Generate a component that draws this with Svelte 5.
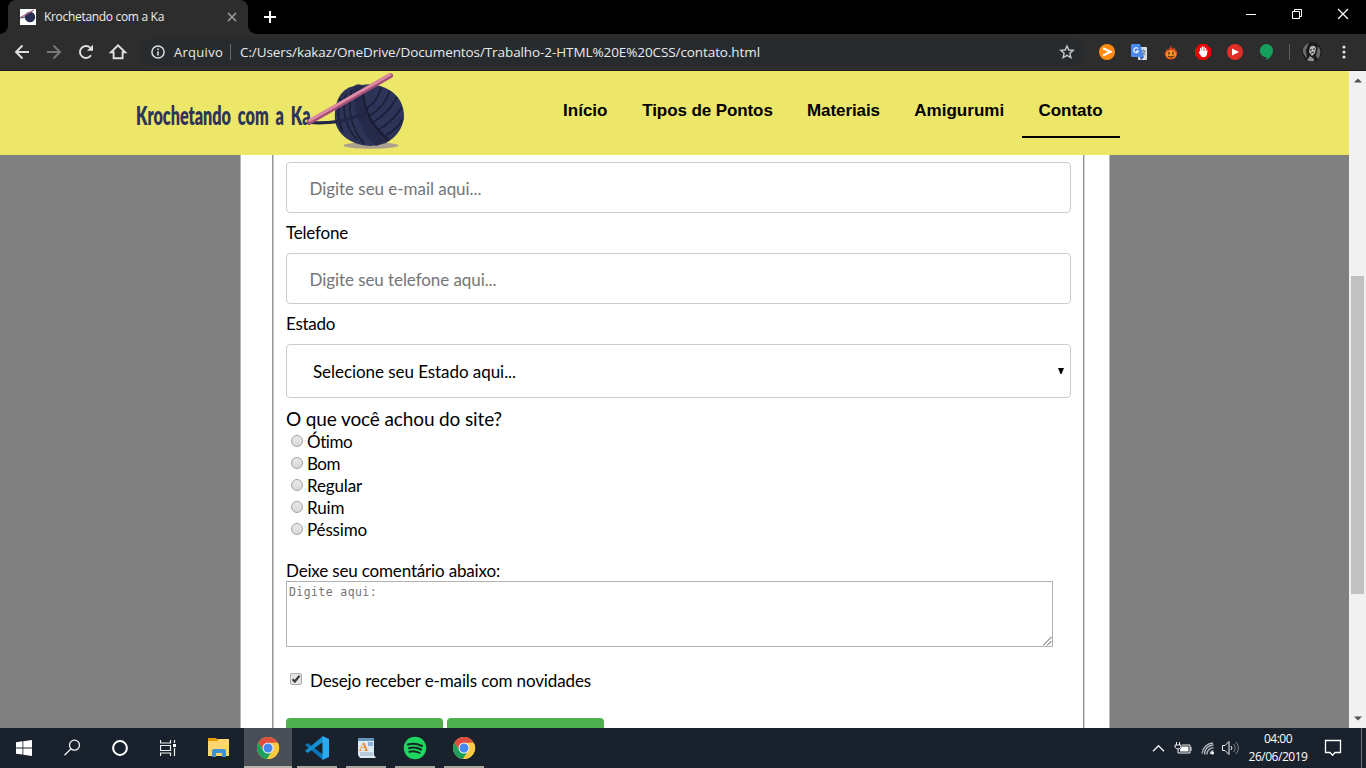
<script>
  const nav = [
    { text: 'Início', w: 44.5 },
    { text: 'Tipos de Pontos', w: 130.5 },
    { text: 'Materiais', w: 73 },
    { text: 'Amigurumi', w: 90 },
    { text: 'Contato', w: 64, active: true }
  ];
  const ratings = [
    { text: 'Ótimo', w: 45.5 },
    { text: 'Bom', w: 33 },
    { text: 'Regular', w: 55 },
    { text: 'Ruim', w: 37.5 },
    { text: 'Péssimo', w: 60 }
  ];

  // Spreads a label's letters so that it takes the given width.
  function fit(node, width) {
    const apply = () => {
      node.style.letterSpacing = '0px';
      const natural = node.getBoundingClientRect().width;
      node.style.letterSpacing = (width - natural) / node.textContent.length + 'px';
    };
    apply();
    document.fonts?.ready.then(apply);
  }
</script>

{#snippet chrome()}
  <svg width="24" height="24" viewBox="0 0 24 24">
    <circle cx="12" cy="12" r="11" fill="#fbc93d" />
    <path d="M2.5 6.5A11 11 0 0 1 21.5 6.5L12 7 7.5 14.5z" fill="#df4d41" />
    <path d="M2.5 6.5A11 11 0 0 0 11 23L16.5 14.5 7.5 14.5z" fill="#1ca15d" />
    <path d="M22 7.200A11 11 0 0 1 11 23L16.7 14.5 16 7.200z" fill="#fdcb42" />
    <circle cx="12" cy="12" r="5.5" fill="#f4f4f4" />
    <circle cx="12" cy="12" r="4.5" fill="#4688ef" />
  </svg>
{/snippet}

{#snippet yarn()}
  <ellipse cx="371" cy="145.500" rx="27.500" ry="3.300" fill="#aaa08f" />
  <path d="M338 99Q343 88 354 86Q357 83 362 85Q377 82 391 91Q404 100 404 117Q402 134 386 143Q370 149 355 143Q338 136 335 121Q334 108 338 99z" fill="#2e3458" />
  <g fill="none" stroke="#1b2038" stroke-width="1.800">
    <path d="M346 94Q339 119 357 140M341 98Q335 117 343 132M352 90Q344 119 364 144" />
    <path d="M366 109Q378 101 381 88M369 116Q384 108 390 91M372 123Q389 113 397 97M376 131Q393 122 402 107M381 138Q397 130 403 119" />
  </g>
  <path d="M354 86Q351 122 376 146L391 139Q364 121 363 86z" fill="#25294a" />
  <path d="M363 88Q363 119 388 140" fill="none" stroke="#171c33" stroke-width="1.800" />
  <path d="M309 122.500Q335 124 352 118L365 114" fill="none" stroke="#202643" stroke-width="3.200" />
  <path d="M309.500 122L390.500 75.500" stroke="#a34f77" stroke-width="5" stroke-linecap="round" />
  <path d="M309.500 120.500L390 74.500" stroke="#df8ba4" stroke-width="2.800" stroke-linecap="round" />
{/snippet}

<div class="screen">
  <div class="tabs">
    <div class="tab">
      <svg class="fav" width="16" height="16" viewBox="0 0 16 16">
        <rect width="16" height="16" fill="#fff" />
        <circle cx="10" cy="8" r="5.2" fill="#292e50" />
        <path d="M0 9L5 8" stroke="#292e50" />
        <path d="M0 8.8L14 1" stroke="#bd6f8e" stroke-width="1.2" />
      </svg>
      <span class="title"><span use:fit={120}>Krochetando com a Ka</span></span>
      <svg class="close" width="10" height="10" viewBox="0 0 10 10"><path d="M1 1l8 8M9 1L1 9" stroke="#a0a1a3" stroke-width="1.5" /></svg>
    </div>
    <svg class="plus" width="12" height="12" viewBox="0 0 12 12"><path d="M6 0v12M0 6h12" stroke="#fff" stroke-width="2" /></svg>
    <svg class="win" width="104" height="12" viewBox="0 0 104 12" fill="none" stroke="#fff">
      <path d="M0 6.5h10" />
      <path d="M46.5 3.5h7v7h-7zM48.500 3.500v-2h7v7h-2" />
      <path d="M92 1l10 10M102 1L92 11" stroke-width="1.2" />
    </svg>
  </div>

  <div class="toolbar">
    <svg class="navicons" width="130" height="34" viewBox="0 0 130 34" fill="none" stroke="#e0e0e1" stroke-width="1.9">
      <path d="M29 17H16M22.500 10.500L16 17l6.500 6.500" />
      <path d="M47 17h13M53.500 10.500L60 17l-6.500 6.500" stroke="#77787a" />
      <path d="M91 20.200a6 6 0 1 1-.8-7.500" />
      <path d="M93 9.700v6h-6z" fill="#e0e0e1" stroke="none" />
      <path d="M111 17.200h2.600v6h9v-6h2.600L118 10.300z" />
    </svg>
    <div class="omni">
      <svg width="14" height="14" viewBox="0 0 14 14"><circle cx="7" cy="7" r="6.100" fill="none" stroke="#dcdddf" stroke-width="1.500" /><path d="M7 6.200V10.500M7 3.500V5" stroke="#dcdddf" stroke-width="1.600" /></svg>
      <span class="arq"><span use:fit={49}>Arquivo</span></span>
      <i></i>
      <span class="url"><span use:fit={520}>C:/Users/kakaz/OneDrive/Documentos/Trabalho-2-HTML%20E%20CSS/contato.html</span></span>
      <svg class="star" width="16" height="16" viewBox="0 0 16 16"><path d="M8 2l1.800 4 4.400.4-3.300 2.900 1 4.300L8 11.300l-3.900 2.300 1-4.300-3.300-2.900L6.200 6z" fill="none" stroke="#c8cacc" stroke-width="1.400" /></svg>
    </div>
    <div class="ext">
      <svg width="16" height="16" viewBox="0 0 16 16"><circle cx="8" cy="8" r="8" fill="#ff8a0c" /><path d="M4 4.300l7.500 3.500L4 11.500" fill="none" stroke="#fff" stroke-width="2.200" /></svg>
      <svg width="16" height="16" viewBox="0 0 16 16"><rect x="7" y="3" width="9" height="13" rx="1" fill="#d9dce0" /><path d="M1 0h8l4 13H1a1 1 0 0 1-1-1V1a1 1 0 0 1 1-1z" fill="#4a8af0" /><path d="M9 13h4l-3 3z" fill="#2757b5" /><path d="M7 4.700A2.400 2.400 0 1 0 7.400 7H5" fill="none" stroke="#fff" stroke-width="1.100" /><path d="M10.500 7h4M12.500 5.500V7M14 7q-.5 3-3 4M11.500 8q1 2.500 3 3" fill="none" stroke="#697d8b" /></svg>
      <svg width="16" height="16" viewBox="0 0 16 16"><path d="M8 1q0 3 2 4l1-2q.5 2 3 4.500c1 5-2 8-6 8S1 12 2 8.500L4 5l1 1q2-1 3-5z" fill="#df471c" /><ellipse cx="8" cy="10.300" rx="5" ry="4" fill="#f69b24" /><path d="M6 8v2.500M10 8v2.500M5 12q3 2 6 0" stroke="#58220f" fill="none" stroke-width="1.300" /></svg>
      <svg width="16" height="16" viewBox="0 0 16 16"><path d="M4.700 0h6.600L16 4.700v6.600L11.300 16H4.700L0 11.300V4.700z" fill="#e10808" /><path d="M5.600 8V4.300M7.300 7V3M9 7V3.200M10.700 8V4.500" stroke="#fff" stroke-width="1.300" stroke-linecap="round" /><path d="M5 7h6.300l1.400-1-.7 4q-.8 3.200-3.600 3.200-2 0-3-2.200L3.700 8.500z" fill="#fff" /></svg>
      <svg width="16" height="16" viewBox="0 0 16 16"><circle cx="8" cy="8" r="8" fill="#e52d27" /><path d="M5 4.500l7 3.500-7 3.500z" fill="#fff" /></svg>
      <svg width="16" height="16" viewBox="0 0 16 16"><path d="M7.500 0a6.600 6.600 0 0 1 6.600 6.600q0 6-6.600 9.400v-2.700A6.600 6.600 0 1 1 7.500 0z" fill="#13a05b" /></svg>
    </div>
    <i class="sep"></i>
    <svg class="avatar" width="20" height="20" viewBox="0 0 20 20">
      <circle cx="10" cy="10" r="10" fill="#1b1b1b" /><path d="M1 7Q3 2 7 1L4 8l1 8Q0 12 1 7M16 4q5 6 0 13l-2-3z" fill="#68696a" />
      <path d="M8 5q4-3 6 1l-1 5-3 3-3-4z" fill="#b5b5b5" /><path d="M8 8h2M11 7h2M9 11l3-1" stroke="#202020" /><path d="M5 18l3-4 4 3v2q-4 1-7-1z" fill="#929292" />
    </svg>
    <svg class="dots" width="4" height="14" viewBox="0 0 4 14" fill="#dfe0e1"><circle cx="2" cy="2" r="1.600" /><circle cx="2" cy="7" r="1.600" /><circle cx="2" cy="12" r="1.600" /></svg>
  </div>

  <div class="view">
    <div class="page">
      <header>
        <svg class="logo" width="280" height="84" viewBox="130 71 280 84">
          <text x="136" y="124.500" textLength="174.500" lengthAdjust="spacingAndGlyphs">Krochetando com a Ka</text>
          {@render yarn()}
        </svg>
        <nav>
          {#each nav as n}<a class:active={n.active}><span use:fit={n.w}>{n.text}</span></a>{/each}
        </nav>
      </header>
      <main>
        <div class="sheet">
          <form>
            <div class="field"><span use:fit={172}>Digite seu e-mail aqui...</span></div>
            <div class="label"><span use:fit={62}>Telefone</span></div>
            <div class="field"><span use:fit={187}>Digite seu telefone aqui...</span></div>
            <div class="label"><span use:fit={49}>Estado</span></div>
            <div class="field select"><span use:fit={203}>Selecione seu Estado aqui...</span><svg width="6" height="6" viewBox="0 0 6 6"><path d="M0 0h6L3.500 6h-1z" /></svg></div>
            <div class="question"><span use:fit={216}>O que você achou do site?</span></div>
            {#each ratings as r}
              <div class="radio"><b></b><span use:fit={r.w}>{r.text}</span></div>
            {/each}
            <div class="comment"><span use:fit={214}>Deixe seu comentário abaixo:</span></div>
            <div class="area"><span use:fit={88}>Digite aqui:</span>
              <svg width="9" height="9" viewBox="0 0 9 9"><path d="M0 8.500L8.500 0M4 8.500L8.500 4" stroke="#555" /></svg>
            </div>
            <div class="check">
              <svg width="12" height="12" viewBox="0 0 12 12"><rect x=".5" y=".5" width="11" height="11" rx="1.500" fill="#e6e6e6" stroke="#adadad" /><path d="M2.600 6.200l2.200 2.300L9.500 2.700" fill="none" stroke="#3b3b3b" stroke-width="2.200" /></svg>
              <span use:fit={281}>Desejo receber e-mails com novidades</span>
            </div>
            <div class="buttons"><i></i><i></i></div>
          </form>
        </div>
      </main>
    </div>
    <div class="scroll">
      <svg width="8" height="5" viewBox="0 0 8 5"><path d="M0 4.500L4 .5l4 4z" fill="#505050" /></svg>
      <i></i>
      <svg width="8" height="5" viewBox="0 0 8 5"><path d="M0 .5l4 4 4-4z" fill="#505050" /></svg>
    </div>
  </div>

  <footer>
    <div class="app"><svg width="16" height="16" viewBox="0 0 16 16" fill="#fff"><path d="M0 2.200l6.500-.9v6.200H0zM7.300 1.200L16 0v7.500H7.300zM0 8.400h6.500v6.200L0 13.700zM7.300 8.400H16V16l-8.700-1.200z" /></svg></div>
    <div class="app"><svg width="18" height="18" viewBox="0 0 18 18" fill="none" stroke="#f1f2f3" stroke-width="1.300"><circle cx="11.500" cy="6.200" r="5" /><path d="M8 9.800L1.500 16.300" /></svg></div>
    <div class="app"><svg width="16" height="16" viewBox="0 0 16 16"><circle cx="8" cy="8" r="6.900" fill="none" stroke="#fff" stroke-width="2" /></svg></div>
    <div class="app"><svg width="16" height="16" viewBox="0 0 16 16" fill="none" stroke="#eff0f1" stroke-width="1.200"><path d="M.5 0v3h10V0M.5 16v-3h10v3M.5 5.500h10v5H.5zM14.500 0v3M14.500 8v8" /><path d="M13 4h3v3h-3z" fill="#fff" stroke="none" /></svg></div>
    <div class="app gap"><svg width="22" height="20" viewBox="0 0 22 20"><path d="M0 2h9l1-1h11v17H0z" fill="#ffd66e" /><path d="M0 0h8l2 2-1 1H0z" fill="#e5a000" /><path d="M4 19v-6q0-2 2-2h10q2 0 2 2v6h-4v-4H8v4z" fill="#3d91d5" /></svg></div>
    <div class="app gap on">{@render chrome()}</div>
    <div class="app gap open"><svg width="24" height="24" viewBox="0 0 24 24"><path d="M0 9l2.500-2L18 18.500v5.500L0 9z" fill="#0875b8" /><path d="M0 15l2.500 2L18 6V0L0 15z" fill="#1590d3" /><path d="M17.500 0L24 3v18l-6.500 3z" fill="#2aabf0" /></svg></div>
    <div class="app gap open"><svg width="19" height="22" viewBox="0 0 19 22"><path d="M1 1h16v17l2 3H3l-2-3z" fill="#dceaf3" /><path d="M1 1h16v3H1z" fill="#6495bd" /><text x="2" y="14" class="wp">A</text><path d="M11 6h5M11 8h5" stroke="#3f79c9" /><path d="M3 16h13M3 18h13" stroke="#91abc2" /></svg></div>
    <div class="app gap open"><svg width="24" height="24" viewBox="0 0 24 24"><circle cx="12" cy="12" r="11.200" fill="#1ed760" /><path d="M5 8.500q7-2 14 1.500M6 12.200q6-1.800 12 1.300M6.500 15.700q5-1.300 10 1.200" fill="none" stroke="#172824" stroke-width="2.100" stroke-linecap="round" /></svg></div>
    <div class="app gap open">{@render chrome()}</div>
    <svg class="tray" width="90" height="20" viewBox="0 0 90 20" fill="none" stroke="#f0f1f2">
      <path d="M1 13.200l5.500-5.500 5.500 5.500" stroke-width="1.400" />
      <path d="M24.500 4v3M27.500 4v3M23 7h6v2q-1 2-3 2t-3-2zM26 11v4h12V7h-8" /><path d="M39 9v4" /><path d="M30 8.500h6.500v5H28v-2z" fill="#fff" stroke="none" />
      <path d="M58.500 16a2.500 2.500 0 0 1 3-3M55 16.500a6 6 0 0 1 6.500-6.500M52.500 16.500a9 9 0 0 1 9-9.500M50 15.500A11.500 11.500 0 0 1 61 5" stroke="#b8bcc1" stroke-width="1.300" /><circle cx="60.500" cy="15" r="1.500" fill="#fff" stroke="none" />
      <path d="M70.500 7.500h2.500l4-4v13l-4-4h-2.500z" /><path d="M79 8q2 2 0 4" /><path d="M81.500 6q3.500 4 0 8M84 4q5 6 0 12" stroke="#77808a" />
    </svg>
    <div class="clock"><div><span use:fit={28}>04:00</span></div><div><span use:fit={59}>26/06/2019</span></div></div>
    <svg class="note" width="18" height="18" viewBox="0 0 18 18" fill="none" stroke="#fff" stroke-width="1.300"><path d="M1.500 1.500h15v12H11l-2.500 2.700L6 13.500H1.500z" /></svg>
    <i class="desk"></i>
  </footer>
</div>

<style>
  :global(body) { margin: 0; overflow: hidden; }
  .screen { width: 1366px; height: 768px; display: flex; flex-direction: column; overflow: hidden; font-family: "Open Sans", sans-serif; }
  .screen :global(*) { box-sizing: border-box; }
  svg { display: block; flex: none; }
  span { white-space: nowrap; display: inline-block; }
  .tabs { height: 34px; background: #000; display: flex; align-items: flex-start; flex: none; }
  .tab { width: 240px; height: 34px; margin-left: 8px; background: #2d2d2d; border-radius: 8px 8px 0 0; display: flex; align-items: center; padding-left: 12px; color: #eee; font-size: 12px; position: relative; }
  .tab::before, .tab::after { content: ""; position: absolute; bottom: 0; width: 8px; height: 8px; background: radial-gradient(circle at 0 0, transparent 7.500px, #2d2d2d 8px); }
  .tab::before { left: -8px; }
  .tab::after { right: -8px; background: radial-gradient(circle at 100% 0, transparent 7.500px, #2d2d2d 8px); }
  .title { margin: -1px 0 0 8px; width: 183px; }
  .plus { margin: 11px 0 0 16px; }
  .win { margin: 8px 16px 0 auto; }
  .toolbar { height: 37px; flex: none; background: #2d2d2d; border-bottom: 1px solid #1c1c1c; display: flex; align-items: center; }
  .navicons { margin-right: 10px; }
  .omni { width: 945px; height: 28px; border-radius: 14px; background: #282b2d; display: flex; align-items: center; padding-left: 11px; font-size: 13.500px; color: #e8eaed; }
  .arq, .url { margin-top: -1px; }
  .arq { width: 49px; margin-left: 9px; font-size: 13px; }
  .omni i { width: 1px; height: 16px; background: #68696b; margin: 0 9px 0 7px; }
  .star { margin: 0 10px 0 auto; }
  .ext { display: flex; gap: 16px; margin-left: 14px; }
  .sep { width: 1px; height: 16px; background: #5c5c5c; margin: 0 12px 0 14px; }
  .dots { margin-left: 20px; }
  .view { display: flex; height: 657px; flex: none; }
  .page { width: 1349px; display: flex; flex-direction: column; overflow: hidden; }
  header { height: 84px; flex: none; background: #ede769; display: flex; padding-left: 130px; }
  .logo text { font: 800 26px Lato, sans-serif; word-spacing: 5px; fill: #2e3458; }
  nav { display: flex; margin-left: 136px; font: bold 17px "Liberation Sans", Arial, sans-serif; color: #000; }
  nav a { height: 67px; padding: 30px 17px 0; border-bottom: 2px solid transparent; line-height: 20px; margin-right: .250px; }
  nav a:first-child { margin-right: .750px; }
  nav a.active { border-color: #000; margin-right: 0; }
  nav a { line-height: 19px; }
  main { flex: 1; min-height: 0; background: #808080; padding-left: 240px; }
  .sheet { width: 870px; height: 573px; background: #fff; border: 1px solid #b5b5b5; border-width: 0 1px; padding-left: 31px; overflow: hidden; }
  form { position: relative; width: 813px; height: 573px; border-left: 1px solid #949494; padding: 7px 12px 0 13px; font: 17px/20px Lato, sans-serif; color: #000; box-shadow: inset 1px 0 #c8c8c8, inset -1px 0 #d2d2d2, inset -2px 0 #949494; }
  .field { width: 785px; height: 51px; border: 1px solid #ccc; border-radius: 4px; padding-left: 22.500px; display: flex; align-items: center; color: #757575; padding-top: 2px; }
  .label { height: 40px; padding-top: 10.400px; }
  .select { height: 54px; color: #000; padding: 1px 6px 0 26px; justify-content: space-between; }
  .select svg { margin-top: -2px; }
  .question { font-size: 19px; height: 33px; padding-top: 11px; }
  .radio { height: 22px; display: flex; padding-left: 5px; line-height: 22px; }
  .radio b { width: 12px; height: 12px; margin: 4px 4px 0 0; border: 1px solid #a2a2a2; border-radius: 50%; background: linear-gradient(#e9e9e9, #d8d8d8); }
  .comment { height: 40px; padding-top: 20px; }
  .area { width: 767px; height: 66px; border: 1px solid #b2b2b2; display: flex; justify-content: space-between; padding-left: 2px; font: 12px/20px "DejaVu Sans Mono", monospace; color: #757575; }
  .area span { font-size: 11.500px; }
  .area svg { align-self: flex-end; }
  .check { display: flex; align-items: center; height: 26px; margin: 20px 0 0 4px; }
  .check span { margin-top: 1px; }
  .check svg { margin: -3px 8px 0 0; }
  .buttons { display: flex; gap: 4px; margin-top: 25px; }
  .buttons i { width: 157px; height: 30px; background: #4caf50; border-radius: 4px; }
  .scroll { width: 17px; background: #f1f1f1; display: flex; flex-direction: column; align-items: center; padding: 7px 0 0; }
  .scroll i { width: 13px; height: 318px; background: #c1c1c1; margin: 193px 0 122px; flex: none; }
  footer { height: 40px; flex: none; background: #19222c; display: flex; color: #fff; }
  .app { width: 48px; height: 40px; display: flex; align-items: center; justify-content: center; border-bottom: 2px solid transparent; padding-top: 2px; background-clip: border-box; }
  .gap { margin-left: 1px; }
  .app:nth-child(5) { margin-left: 3px; }
  .on { background: #4a4e56; border-color: #bab4ae; }
  .open { width: 40px; margin: 0 4px 0 5px; border-color: #aaa6a2; }
  .wp { font: bold 13px "Liberation Serif", serif; fill: #ef8632; }
  .tray { margin: 10px 0 0 auto; }
  .clock { width: 60px; margin-left: 6px; text-align: center; font-size: 12px; line-height: 18px; padding-top: 2px; }
  .note { margin: 11px 19px 0 16px; }
  .desk { width: 1px; height: 40px; background: #6b727a; margin-right: 4px; }
</style>
